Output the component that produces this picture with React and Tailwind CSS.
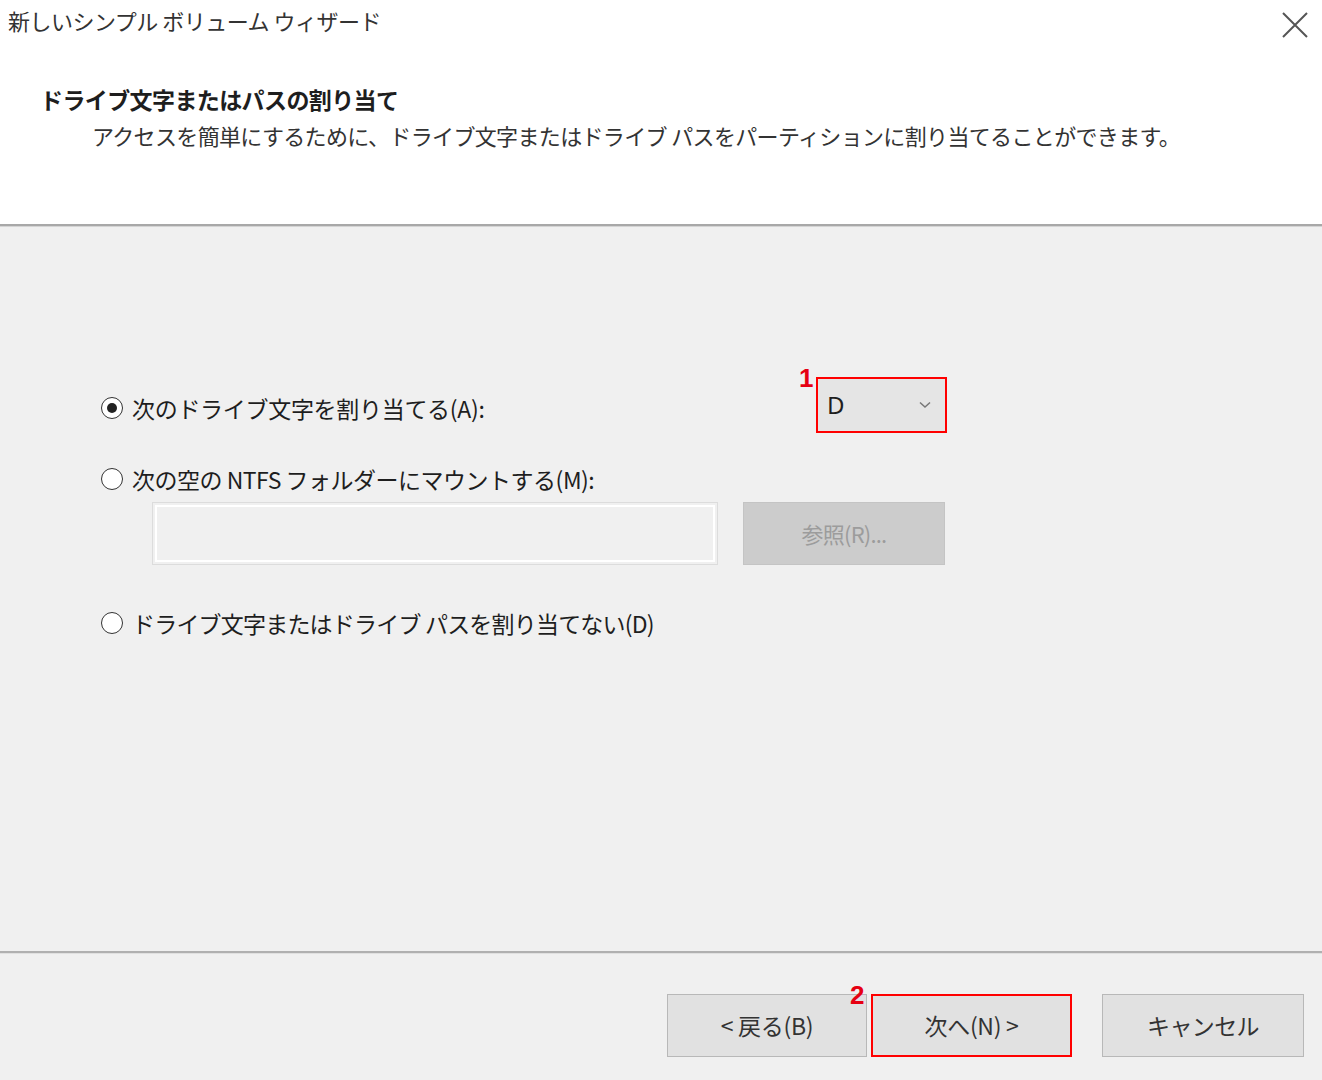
const FONT = { fontFamily: '"Noto Sans CJK JP", "Noto Sans", sans-serif' };

function Radio({ checked }) {
  return (
    <span className="flex h-[22px] w-[22px] shrink-0 items-center justify-center rounded-full border-[1.5px] border-[#333] bg-white">
      {checked && <span className="h-[10px] w-[10px] rounded-full bg-[#222]" />}
    </span>
  );
}

function Marker({ n, className }) {
  return (
    <span
      className={`absolute text-[26px] font-bold leading-none text-[#e60012] ${className}`}
      style={{ fontFamily: '"Liberation Sans", Arial, sans-serif' }}
    >
      {n}
    </span>
  );
}

export default function App() {
  return (
    <div className="flex h-[1080px] w-[1322px] flex-col bg-[#f0f0f0] text-[#1e1e1e]" style={FONT}>
      {/* header */}
      <div className="h-[224px] shrink-0 bg-white">
        <div className="flex items-start justify-between pl-[8px] pr-[14px] pt-[4px]">
          <span className="text-[22px] leading-[32px] text-[#333] tracking-[-0.5px]">新しいシンプル ボリューム ウィザード</span>
          <svg width="26" height="26" viewBox="0 0 26 26" className="mt-[8px]">
            <path d="M1 1 L25 25 M25 1 L1 25" stroke="#555" strokeWidth="2" />
          </svg>
        </div>
        <div className="mt-[46px] pl-[40px] text-[23px] font-bold leading-[30px] tracking-[-0.6px]">
          ドライブ文字またはパスの割り当て
        </div>
        <div className="mt-[6px] pl-[92px] text-[22px] leading-[30px] tracking-[-0.65px] text-[#333]">
          アクセスを簡単にするために、ドライブ文字またはドライブ パスをパーティションに割り当てることができます。
        </div>
      </div>
      <div className="h-[3px] shrink-0 border-t-2 border-[#a8a8a8] bg-[#d4d4d4]" />

      {/* body */}
      <div className="flex flex-1 flex-col pl-[101px]">
        <div className="mt-[150px] flex h-[56px] items-center">
          <div className="flex w-[715px] items-center gap-[9px] pt-[6px]">
            <Radio checked />
            <span className="text-[23px] tracking-[-0.3px]">次のドライブ文字を割り当てる(A):</span>
          </div>
          <div className="relative">
            <Marker n="1" className="-left-[17px] -top-[12px]" />
            <div className="flex h-[56px] w-[131px] items-center justify-between border-2 border-[#ff0000] bg-[#e5e5e5] pl-[9px] pr-[14px]">
              <span className="text-[24px]" style={{ fontFamily: '"Noto Sans", sans-serif' }}>D</span>
              <svg width="12" height="8" viewBox="0 0 12 8">
                <path d="M1 1.5 L6 6 L11 1.5" fill="none" stroke="#777" strokeWidth="1.5" />
              </svg>
            </div>
          </div>
        </div>

        <div className="mt-[32px] flex h-[28px] items-center gap-[9px]">
          <Radio />
          <span className="text-[23px] tracking-[-0.5px]">次の空の NTFS フォルダーにマウントする(M):</span>
        </div>

        <div className="ml-[51px] mt-[9px] flex gap-[25px]">
          <div className="h-[63px] w-[566px] border border-[#dcdcdc] p-[2px]">
            <div className="h-full w-full border-2 border-white bg-[#f0f0f0]" />
          </div>
          <div className="flex h-[63px] w-[202px] items-center justify-center border border-[#c4c4c4] bg-[#cccccc] text-[22px] tracking-[-0.8px] text-[#9c9c9c]">
            参照(R)...
          </div>
        </div>

        <div className="mt-[44px] flex h-[28px] items-center gap-[9px]">
          <Radio />
          <span className="text-[23px] tracking-[-0.8px]">ドライブ文字またはドライブ パスを割り当てない(D)</span>
        </div>
      </div>

      {/* footer */}
      <div className="h-[3px] shrink-0 border-t-2 border-[#b0b0b0] bg-[#e0e0e0]" />
      <div className="flex h-[126px] shrink-0 items-start justify-end pr-[18px] pt-[40px]">
        <button className="flex h-[63px] w-[200px] items-center justify-center border border-[#b8b8b8] bg-[#e1e1e1] text-[23px] tracking-[-0.3px] text-[#333]">
          &lt; 戻る(B)
        </button>
        <div className="relative ml-[4px]">
          <Marker n="2" className="-left-[21px] -top-[12px]" />
          <button className="flex h-[63px] w-[201px] items-center justify-center border-2 border-[#ff0000] bg-[#e1e1e1] text-[23px] tracking-[-0.3px] text-[#333]">
            次へ(N) &gt;
          </button>
        </div>
        <button className="ml-[30px] flex h-[63px] w-[202px] items-center justify-center border border-[#b8b8b8] bg-[#e1e1e1] text-[23px] tracking-[-0.6px] text-[#333]">
          キャンセル
        </button>
      </div>
    </div>
  );
}
